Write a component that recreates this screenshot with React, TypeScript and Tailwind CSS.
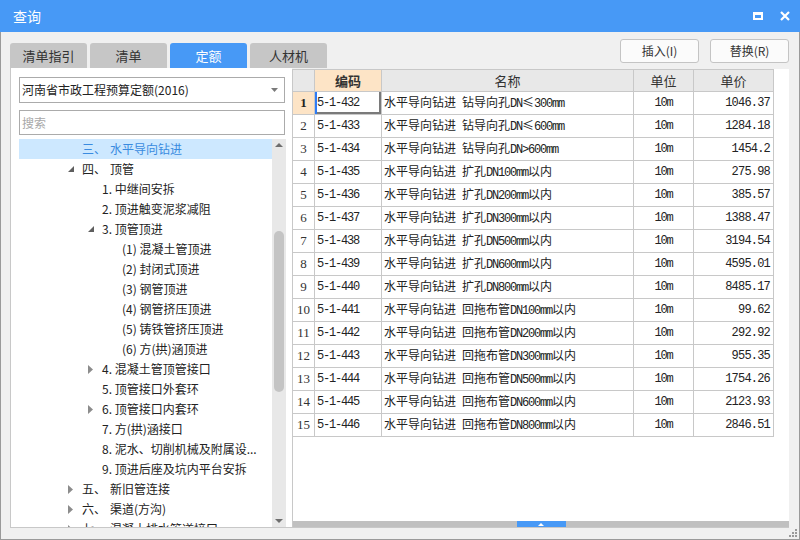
import React from 'react';

interface TreeRow {
  lv: number;
  num?: string;
  text: string;
  arrow?: 'open' | 'closed';
  sel?: boolean;
}

const tree: TreeRow[] = [
  { lv: 0, num: '三、', text: '水平导向钻进', sel: true },
  { lv: 0, num: '四、', text: '顶管', arrow: 'open' },
  { lv: 1, text: '1. 中继间安拆' },
  { lv: 1, text: '2. 顶进触变泥浆减阻' },
  { lv: 1, text: '3. 顶管顶进', arrow: 'open' },
  { lv: 2, text: '(1) 混凝土管顶进' },
  { lv: 2, text: '(2) 封闭式顶进' },
  { lv: 2, text: '(3) 钢管顶进' },
  { lv: 2, text: '(4) 钢管挤压顶进' },
  { lv: 2, text: '(5) 铸铁管挤压顶进' },
  { lv: 2, text: '(6) 方(拱)涵顶进' },
  { lv: 1, text: '4. 混凝土管顶管接口', arrow: 'closed' },
  { lv: 1, text: '5. 顶管接口外套环' },
  { lv: 1, text: '6. 顶管接口内套环', arrow: 'closed' },
  { lv: 1, text: '7. 方(拱)涵接口' },
  { lv: 1, text: '8. 泥水、切削机械及附属设...' },
  { lv: 1, text: '9. 顶进后座及坑内平台安拆' },
  { lv: 0, num: '五、', text: '新旧管连接', arrow: 'closed' },
  { lv: 0, num: '六、', text: '渠道(方沟)', arrow: 'closed' },
  { lv: 0, num: '七、', text: '混凝土排水管道接口', arrow: 'closed' },
];

const indent = ['pl-[49px]', 'pl-[69px]', 'pl-[89px]'];

const rows = [
  ['5-1-432', '水平导向钻进 钻导向孔DN≤300mm', '1046.37'],
  ['5-1-433', '水平导向钻进 钻导向孔DN≤600mm', '1284.18'],
  ['5-1-434', '水平导向钻进 钻导向孔DN>600mm', '1454.2'],
  ['5-1-435', '水平导向钻进 扩孔DN100mm以内', '275.98'],
  ['5-1-436', '水平导向钻进 扩孔DN200mm以内', '385.57'],
  ['5-1-437', '水平导向钻进 扩孔DN300mm以内', '1388.47'],
  ['5-1-438', '水平导向钻进 扩孔DN500mm以内', '3194.54'],
  ['5-1-439', '水平导向钻进 扩孔DN600mm以内', '4595.01'],
  ['5-1-440', '水平导向钻进 扩孔DN800mm以内', '8485.17'],
  ['5-1-441', '水平导向钻进 回拖布管DN100mm以内', '99.62'],
  ['5-1-442', '水平导向钻进 回拖布管DN200mm以内', '292.92'],
  ['5-1-443', '水平导向钻进 回拖布管DN300mm以内', '955.35'],
  ['5-1-444', '水平导向钻进 回拖布管DN500mm以内', '1754.26'],
  ['5-1-445', '水平导向钻进 回拖布管DN600mm以内', '2123.93'],
  ['5-1-446', '水平导向钻进 回拖布管DN800mm以内', '2846.51'],
];

// ascii bits narrow like the half-width glyphs in the original
function Mixed({ text }: { text: string }) {
  return (
    <span className="whitespace-pre">
      {text.split(/([\x20-\x7e]+)/).map((p, i) =>
        /^[\x20-\x7e]+$/.test(p) ? (
          <span key={i} className="font-['Liberation_Mono',monospace] tracking-[-1.2px]">{p}</span>
        ) : (
          <span key={i}>{p}</span>
        )
      )}
    </span>
  );
}

function Arrow({ kind }: { kind?: 'open' | 'closed' }) {
  if (kind === 'open')
    return (
      <svg width="6" height="6" viewBox="0 0 6 6"><path d="M6 0 L6 6 L0 6 Z" fill="#5f5f5f" /></svg>
    );
  if (kind === 'closed')
    return (
      <svg width="5" height="9" viewBox="0 0 5 9"><path d="M0 0 L5 4.5 L0 9 Z" fill="#8c8c8c" /></svg>
    );
  return null;
}

const tabs = ['清单指引', '清单', '定额', '人材机'];

export default function App() {
  return (
    <div className="w-[800px] h-[540px] flex flex-col bg-[#f0f0f0] font-['Noto_Sans_CJK_SC',sans-serif] text-[#222] relative overflow-hidden">
      {/* title */}
      <div className="h-[32px] bg-[#4799f6] flex items-center pl-[13px] pr-[10px] text-white">
        <span className="text-[14px]">查询</span>
        <div className="ml-auto flex items-center gap-[17px]">
          <div className="w-[10px] h-[8px] border-2 border-white border-t-[3px]" />
          <svg width="10" height="10" viewBox="0 0 10 10">
            <path d="M1 1 L9 9 M9 1 L1 9" stroke="white" strokeWidth="2.2" />
          </svg>
        </div>
      </div>

      <div className="flex-1 flex flex-col border-x border-b border-[#9a9a9a] pl-[9px] pr-[10px]">
        {/* tabs + buttons */}
        <div className="h-[36px] flex">
          <div className="flex items-end gap-[3px]">
            {tabs.map(t => (
              <div
                key={t}
                className={`w-[77px] h-[25px] rounded-t-[3px] flex items-center justify-center text-[13px] ${t === '定额' ? 'bg-[#4799f6] text-white' : 'bg-[#c6c6c6] text-[#333]'}`}
              >
                {t}
              </div>
            ))}
          </div>
          <div className="ml-auto mt-[7px] flex gap-[11px]">
            <button className="w-[79px] h-[24px] bg-[#fbfbfb] border border-[#c4c4c4] rounded-[3px] text-[12px] text-[#333]">插入(I)</button>
            <button className="w-[79px] h-[24px] bg-[#fbfbfb] border border-[#c4c4c4] rounded-[3px] text-[12px] text-[#333]">替换(R)</button>
          </div>
        </div>

        {/* main */}
        <div className="h-[460px] flex">
          {/* left */}
          <div className="w-[282px] bg-white border-l border-b border-[#c8c8c8] pt-[9px] pl-[8px] flex flex-col">
            <div className="w-[266px] h-[26px] border border-[#ababab] flex items-center pl-[2px] pr-[6px] text-[12px]">
              <span>河南省市政工程预算定额(2016)</span>
              <svg className="ml-auto" width="7" height="4" viewBox="0 0 7 4"><path d="M0 0 L7 0 L3.5 4 Z" fill="#7a7a7a" /></svg>
            </div>
            <div className="w-[266px] h-[25px] mt-[7px] border border-[#ababab] flex items-center pl-[2px] text-[12px] text-[#a8a8a8]">
              搜索
            </div>
            <div className="mt-[4px] h-[388px] flex overflow-hidden">
              <div className="w-[253px]">
                {tree.map((r, i) => (
                  <div
                    key={i}
                    className={`h-[20px] flex items-center text-[12px] whitespace-nowrap ${indent[r.lv]} ${r.sel ? 'bg-[#cde8ff] text-[#3a8be0]' : ''}`}
                  >
                    <div className="w-[14px] flex items-center">
                      <Arrow kind={r.arrow} />
                    </div>
                    {r.num && <span className="w-[28px]">{r.num}</span>}
                    <span>{r.text}</span>
                  </div>
                ))}
              </div>
              <div className="w-[14px] bg-[#e8e8e8] flex flex-col items-center">
                <svg className="mt-[4px]" width="8" height="4" viewBox="0 0 8 4"><path d="M4 0 L8 4 L0 4 Z" fill="#6e6e6e" /></svg>
                <div className="mt-[84px] w-[10px] h-[161px] rounded-full bg-[#c4c4c4]" />
                <svg className="mt-auto mb-[4px]" width="8" height="4" viewBox="0 0 8 4"><path d="M0 0 L8 0 L4 4 Z" fill="#6e6e6e" /></svg>
              </div>
            </div>
          </div>

          {/* right table */}
          <div className="flex-1 bg-white border-l border-b border-[#c8c8c8] flex flex-col mt-[1px]">
            <div className="flex-1 text-[12px]">
              <div className="grid grid-cols-[22px_67px_252px_60px_80px] h-[23px] border-b border-t border-[#c8c8c8] w-[481px] text-[13px] text-[#333]">
                <div className="bg-[#e8e8e8] border-r border-[#c8c8c8]" />
                <div className="bg-[#fde4c6] border-r border-[#c8c8c8] flex items-center justify-center font-bold">编码</div>
                <div className="bg-[#e8e8e8] border-r border-[#c8c8c8] flex items-center justify-center">名称</div>
                <div className="bg-[#e8e8e8] border-r border-[#c8c8c8] flex items-center justify-center">单位</div>
                <div className="bg-[#e8e8e8] border-r border-[#c8c8c8] flex items-center justify-center">单价</div>
              </div>
              {rows.map((r, i) => (
                <div key={i} className="grid grid-cols-[22px_67px_252px_60px_80px] h-[23px] border-b border-[#c8c8c8] w-[481px]">
                  <div
                    className={`border-r border-[#c8c8c8] flex items-center justify-center font-['Liberation_Serif',serif] text-[13px] ${i === 0 ? 'bg-[#fde4c6] font-bold' : 'text-[#333]'}`}
                  >
                    {i + 1}
                  </div>
                  <div
                    className={`border-r border-[#c8c8c8] flex items-center pl-[2px] font-['Liberation_Mono',monospace] tracking-[-1.2px] ${i === 0 ? 'shadow-[inset_2px_0_0_#2e7cf6,inset_-2px_-2px_0_#7a7a7a]' : ''}`}
                  >
                    {r[0]}
                  </div>
                  <div className="border-r border-[#c8c8c8] flex items-center pl-[2px] overflow-hidden">
                    <Mixed text={r[1]} />
                  </div>
                  <div className="border-r border-[#c8c8c8] flex items-center justify-center font-['Liberation_Mono',monospace] tracking-[-1.2px]">
                    10m
                  </div>
                  <div className="border-r border-[#c8c8c8] flex items-center justify-end pr-[3px] font-['Liberation_Mono',monospace] tracking-[-0.8px]">
                    {r[2]}
                  </div>
                </div>
              ))}
            </div>
            <div className="h-[6px] bg-[#c0c0c0] flex justify-center">
              <div className="w-[49px] h-[6px] bg-[#4799f6] flex items-center justify-center">
                <svg width="6" height="3" viewBox="0 0 6 3"><path d="M3 0 L6 3 L0 3 Z" fill="white" /></svg>
              </div>
            </div>
          </div>
        </div>
      </div>

      {/* resize grip */}
      <svg className="absolute right-[3px] bottom-[3px]" width="8" height="8" viewBox="0 0 8 8">
        <rect x="6" y="0" width="2" height="2" fill="#9a9a9a" />
        <rect x="3" y="3" width="2" height="2" fill="#9a9a9a" />
        <rect x="6" y="3" width="2" height="2" fill="#9a9a9a" />
        <rect x="0" y="6" width="2" height="2" fill="#9a9a9a" />
        <rect x="3" y="6" width="2" height="2" fill="#9a9a9a" />
        <rect x="6" y="6" width="2" height="2" fill="#9a9a9a" />
      </svg>
    </div>
  );
}
